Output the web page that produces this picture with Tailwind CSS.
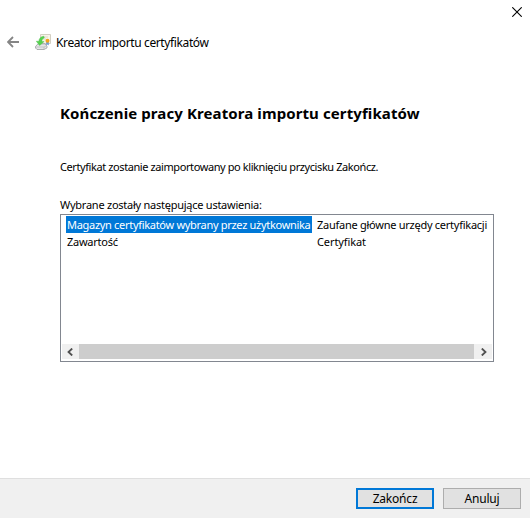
<!DOCTYPE html>
<html lang="pl">
<head>
<meta charset="utf-8">
<title>Kreator importu certyfikatów</title>
<script src="https://cdn.jsdelivr.net/npm/@tailwindcss/browser@4"></script>
</head>
<body class="w-[530px] h-[518px] overflow-hidden bg-white text-black font-['Noto_Sans',sans-serif] whitespace-nowrap flex flex-col">
  <div class="h-[25px] shrink-0 flex justify-end pt-[7px] pr-[8px]">
    <svg class="w-[10px] h-[10px]" viewBox="0 0 10 10" fill="none" stroke="#000" stroke-width="1.1"><path d="M.3.3 9.7 9.7M9.7.3.3 9.7"/></svg>
  </div>
  <header class="h-[35px] shrink-0 flex items-center pl-[7px]">
    <svg class="w-[12px] h-[12px] -mt-[2px]" viewBox="0 0 12 12" fill="none" stroke="#858585" stroke-width="1.8"><path d="M12 6H1M6 1 1 6l5 5"/></svg>
    <svg class="w-[16px] h-[16px] ml-[16px] -mt-[2px]" viewBox="0 0 16 16">
      <path d="M5.5.5h10v9h-10z" fill="#f7f4e9" stroke="#d3cfc2"/>
      <path d="M8 3h5M8 5h3" stroke="#ddd8c8"/>
      <path d="M11.2 7v4.5l1.3-1 1.3 1V7z" fill="#6f9ad2"/>
      <circle cx="12.5" cy="6.8" r="2" fill="#f0a21c"/>
      <path d="M.5 12.5 3 9.8h7l2 2.3v1.8L9 15.5H2L.5 14z" fill="#e4e5e6" stroke="#9b9d9f" stroke-width=".8"/>
      <path d="M1 13h8l2.6-1.3M9 13v2" fill="none" stroke="#b4b6b8" stroke-width=".7"/>
      <path d="M8.8 2.2C5.5 2.6 4 4.6 3.9 7.2H1.3l3.3 4.4 4.5-4H6.9c0-2 .7-3 2.4-3.6z" fill="#55d24e" stroke="#4ab84a" stroke-width=".4"/>
    </svg>
    <h1 class="ml-[5px] text-[12px] leading-[16px] tracking-[-0.38px]">Kreator importu certyfikatów</h1>
  </header>
  <main class="h-[418px] shrink-0 px-[60px] pr-[36px] pt-[43px]">
    <h2 class="text-[15px] leading-[20px] font-bold tracking-[0.1px]">Kończenie pracy Kreatora importu certyfikatów</h2>
    <p class="mt-[36px] text-[11px] leading-[16px] tracking-[-0.41px]">Certyfikat zostanie zaimportowany po kliknięciu przycisku Zakończ.</p>
    <p class="mt-[22px] text-[11px] leading-[16px] tracking-[-0.25px]">Wybrane zostały następujące ustawienia:</p>
    <section class="mt-[1px] w-[434px] h-[148px] border border-[#828790] p-px flex flex-col justify-between text-[11px] leading-[17px]">
      <div class="pl-[4px]">
        <div class="flex h-[17px]"><span class="w-[246px] pl-px bg-[#0078d7] text-white tracking-[-0.3px]">Magazyn certyfikatów wybrany przez użytkownika</span><span class="pl-[5px] tracking-[-0.26px]">Zaufane główne urzędy certyfikacji</span></div>
        <div class="flex h-[17px]"><span class="w-[246px] pl-px tracking-[-0.25px]">Zawartość</span><span class="pl-[5px] tracking-[-0.1px]">Certyfikat</span></div>
      </div>
      <div class="h-[15px] mb-px flex bg-[#f0f0f0]">
        <div class="w-[17px] pr-[2px] flex items-center justify-center"><svg class="w-[6px] h-[8px]" viewBox="0 0 6 8" fill="none" stroke="#505050" stroke-width="1.8"><path d="M5.2.5 1.5 4l3.7 3.5"/></svg></div>
        <div class="flex-1 bg-[#cdcdcd]"></div>
        <div class="w-[18px] pl-[2px] flex items-center justify-center"><svg class="w-[6px] h-[8px]" viewBox="0 0 6 8" fill="none" stroke="#505050" stroke-width="1.8"><path d="M.8.5 4.5 4 .8 7.5"/></svg></div>
      </div>
    </section>
  </main>
  <footer class="h-[40px] shrink-0 bg-[#f0f0f0] border-t border-[#dfdfdf] pt-[9px] pl-[356px] flex gap-[9px] items-start text-[12px] tracking-[-0.2px]">
    <button class="w-[78px] h-[21px] bg-[#e1e1e1] border-2 border-[#0078d7] flex items-center justify-center leading-[16px]">Zakończ</button>
    <button class="w-[78px] h-[21px] bg-[#e1e1e1] border border-[#adadad] flex items-center justify-center leading-[16px]">Anuluj</button>
  </footer>
</body>
</html>
